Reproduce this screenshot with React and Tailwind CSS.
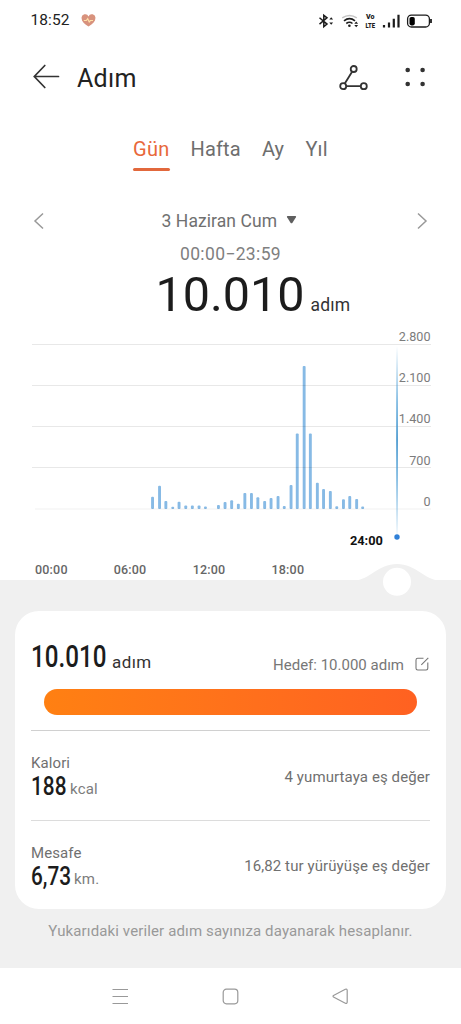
import React from "react";

const bars = [
  [152.5, 496.7], [159.5, 485.7], [165.8, 501], [172.7, 506.8], [179, 501.8],
  [185.7, 505.4], [192.3, 505.4], [199, 505.4], [205.4, 506.6], [218.4, 505],
  [225, 502], [231.6, 500.3], [238.3, 503.7], [244.8, 493], [251.4, 493],
  [257.8, 497.3], [264.6, 501], [271, 498], [278, 496], [284.2, 506],
  [291, 485], [297.2, 433.5], [304.1, 366], [310.3, 433.5], [317.3, 482.7],
  [323.5, 489], [330.3, 491], [336.7, 506.2], [343.4, 499.3], [349.7, 496],
  [356.6, 499], [362.6, 506.4],
];

const yAxis = [
  ["2.800", 341, 344.5],
  ["2.100", 382, 385.5],
  ["1.400", 423, 426.5],
  ["700", 464.7, 467.5],
  ["0", 505.5, 509],
];

const xAxis = [["00:00", 35], ["06:00", 113.7], ["12:00", 192.7], ["18:00", 271.5]];

function StatusBar() {
  return (
    <div className="flex h-[41px] items-center justify-between pl-[30.5px] pr-[28px]">
      <div className="flex items-center">
        <span className="text-[15.5px] tracking-[0.1px] text-[#222]">18:52</span>
        <svg className="ml-[11.5px]" width="15" height="13" viewBox="0 0 15 13">
          <path d="M7.5 12.6C3 9.6.6 7.2.6 4.2A3.6 3.6 0 0 1 7.5 2.4 3.6 3.6 0 0 1 14.4 4.2c0 3-2.4 5.400-6.900 8.400z" fill="#d8927d" />
          <path d="M2.800 6.500h2.500l1.400-1.800 1.500 3.200 1.200-1.400h2.600" fill="none" stroke="#ffe0a8" strokeWidth="1.200" />
        </svg>
      </div>
      <svg width="115" height="16" viewBox="318 12.500 115 16" fill="none" stroke="#1c1c1c">
        <path d="M319.500 17.300l7.500 6.300-3.200 2.500V14.800l3.200 2.500-7.500 6.300" strokeWidth="1.500" />
        <path d="M329.300 19l1.900-2.300 1.900 2.300zM329.300 22l1.900 2.300 1.900-2.300z" fill="#1c1c1c" stroke="none" />
        <path d="M342.200 17.400q7.300-4.800 14.600 0" stroke="#c4c4c4" strokeWidth="1.500" />
        <path d="M344 20.300q5.500-4.300 11 0" strokeWidth="1.700" />
        <path d="M346.300 23q3.200-2.400 6.200 0" strokeWidth="1.600" />
        <circle cx="349.400" cy="25.300" r="1.300" fill="#1c1c1c" stroke="none" />
        <path d="M354.300 23.300l1.900-2.200 1.900 2.200zM354.300 24.500l1.900 2.200 1.900-2.200z" fill="#1c1c1c" stroke="none" />
        <text x="366" y="18.900" textLength="8.500" lengthAdjust="spacingAndGlyphs" fontSize="6.600" fontWeight="900" fill="#1c1c1c" stroke="none">Vo</text>
        <text x="365.500" y="27.400" textLength="9.600" lengthAdjust="spacingAndGlyphs" fontSize="7" fontWeight="900" fill="#1c1c1c" stroke="none">LTE</text>
        <path d="M384 24.600V27M389 22v5M393.800 18.300V27M398.500 14.300V27" strokeWidth="2.200" />
        <rect x="407.600" y="14.700" width="21.800" height="11.800" rx="3.800" strokeWidth="1.300" />
        <rect x="409.500" y="16.400" width="5.300" height="8.500" rx="1.800" fill="#000" stroke="none" />
        <path d="M431 18.500v4" strokeWidth="1.800" />
      </svg>
    </div>
  );
}

function Header() {
  return (
    <div className="flex h-[74px] items-center pl-[33px] pr-[35px]">
      <svg className="-mt-[3px]" width="27" height="25" viewBox="0 0 27 25" fill="none" stroke="#333" strokeWidth="1.700" strokeLinecap="round">
        <path d="M11.800 1.500L1.300 12.500 11.800 23.500M1.300 12.500H25.500" />
      </svg>
      <h1 className="ml-[17px] mt-[2px] text-[25px] font-normal leading-[30px] tracking-[0.3px] text-[#222]">Adım</h1>
      <svg className="-mt-[2px] ml-auto" width="30" height="27" viewBox="0 0 30 27" fill="none" stroke="#333" strokeWidth="1.800">
        <circle cx="15.700" cy="5" r="3" />
        <circle cx="5.200" cy="22.200" r="3" />
        <circle cx="25.800" cy="22.200" r="3" />
        <path d="M14.100 7.700L6.800 19.500M8.300 22.200H22.700" />
      </svg>
      <svg className="-mt-[3px] ml-[36.500px]" width="22" height="22" viewBox="0 0 22 22" fill="#333">
        <circle cx="3.700" cy="4" r="2.300" />
        <circle cx="18.600" cy="4" r="2.300" />
        <circle cx="3.700" cy="18" r="2.300" />
        <circle cx="18.600" cy="18" r="2.300" />
      </svg>
    </div>
  );
}

function Tabs() {
  return (
    <nav className="flex h-[60px] pl-[133px] pt-[14px] text-[20px] leading-[40px] text-[#6e6e6e]">
      <div className="w-[37px] text-[#e8683a]">
        <div className="h-[39px] tracking-[0.3px]">Gün</div>
        <div className="h-[2.5px] rounded-full bg-[#e2683c]" />
      </div>
      <div className="ml-[20.5px] w-[52px] tracking-[0.15px]">Hafta</div>
      <div className="ml-[19.5px] w-[24px]">Ay</div>
      <div className="ml-[19.5px] tracking-[0.1px]">Yıl</div>
    </nav>
  );
}

function Summary() {
  return (
    <section>
      <div className="mt-[26px] flex h-[40px] items-center pl-[33px] pr-[33px]">
        <svg width="12" height="18" viewBox="0 0 12 18" fill="none" stroke="#999" strokeWidth="1.500"><path d="M10 1.500L2 9l8 7.500" /></svg>
        <span className="ml-[116.500px] w-[117px] whitespace-nowrap text-[17.500px] tracking-[0.080px] text-[#707070]">3 Haziran Cum</span>
        <svg className="-mt-[3px] ml-[7px]" width="11" height="8" viewBox="0 0 11 8" fill="#5f5f5f"><path d="M1.800 0h7.400q1.500 0 .7 1.300L6.500 6.700q-1 1-2 0L1.100 1.300Q.3 0 1.800 0z" /></svg>
        <svg className="ml-auto" width="12" height="18" viewBox="0 0 12 18" fill="none" stroke="#999" strokeWidth="1.500"><path d="M2 1.500L10 9l-8 7.500" /></svg>
      </div>
      <div className="h-[26px] text-center text-[17.500px] leading-[26px] tracking-[0.35px] text-[#808080]">00:00−23:59</div>
      <div className="flex h-[55px] items-baseline pl-[155.500px] text-[#1c1c1c]">
        <span className="w-[150px] text-[48.500px] leading-[55px]">10.010</span>
        <span className="ml-[5px] text-[17.500px] leading-[20px] tracking-[0.2px] text-[#333]">adım</span>
      </div>
    </section>
  );
}

function StepChart() {
  return (
    <svg className="relative block overflow-visible" width="461" height="258" viewBox="0 322 461 258">
      <defs>
        <linearGradient id="cursor" x1="0" y1="0" x2="0" y2="1">
          <stop offset="0" stopColor="#4d9fd6" stopOpacity="0" />
          <stop offset="0.300" stopColor="#4d9fd6" stopOpacity="0.750" />
          <stop offset="0.500" stopColor="#4596cd" />
          <stop offset="0.700" stopColor="#4d9fd6" stopOpacity="0.750" />
          <stop offset="1" stopColor="#4d9fd6" stopOpacity="0.080" />
        </linearGradient>
      </defs>
      {bars.map(([x, y]) => (
        <rect key={x} x={x - 1.400} y={y} width="2.900" height={509 - y} rx="1" fill="#87bae5" />
      ))}
      {yAxis.map(([label, base, line]) => (
        <g key={label}>
          <path d={`M${label === "0" ? 35 : 32} ${line}H431`} stroke="#000" strokeOpacity={label === "0" ? 0.060 : 0.090} />
          <text x="430.500" y={base} textAnchor="end" fontSize="12.600" fill="#7c7c7c">{label}</text>
        </g>
      ))}
      <rect x="396.200" y="346" width="1.700" height="188" fill="url(#cursor)" />
      <circle cx="397" cy="537" r="2.700" fill="#2f80d8" />
      <text x="350" y="545.300" textLength="32.800" fontSize="12.800" fontWeight="700" fill="#111">24:00</text>
      {xAxis.map(([label, x]) => (
        <text key={label} x={x} y="574.400" textLength="32.500" fontSize="12.500" fontWeight="500" fill="#666">{label}</text>
      ))}
      <path d="M354 580.500C370 580 378 564 397 564S424 580 440 580.500z" fill="#f0f0f0" />
      <circle cx="397" cy="581.800" r="14" fill="#fff" />
    </svg>
  );
}

function Metric({ label, value, valueClass, unit, note, noteClass }) {
  return (
    <div className="flex h-[89px] justify-between">
      <div className="pt-[22px]">
        <div className="text-[15px] leading-[20px] tracking-[0.1px] text-[#707070]">{label}</div>
        <div className="flex items-baseline">
          <div className={valueClass}>
            <span className="inline-block origin-left scale-x-[0.8] text-[26px] font-medium leading-[26px] text-[#1c1c1c]">{value}</span>
          </div>
          <span className="-translate-y-px text-[15px] leading-[20px] tracking-[0.2px] text-[#7c7c7c]">{unit}</span>
        </div>
      </div>
      <div className={noteClass}>{note}</div>
    </div>
  );
}

function DetailCard() {
  return (
    <div className="mx-[15px] h-[298px] rounded-[24px] bg-white px-4 pt-[32px]">
      <div className="flex h-[30px] items-center">
        <div className="w-[81px]">
          <span className="inline-block origin-left scale-x-[0.78] text-[31px] font-medium leading-[30px] text-[#1c1c1c]">10.010</span>
        </div>
        <span className="mt-[8px] text-[17px] leading-[20px] tracking-[0.4px] text-[#333]">adım</span>
        <span className="ml-auto mt-[13px] text-[15px] leading-[20px] text-[#777]">Hedef: 10.000 adım</span>
        <svg className="ml-[11px] mr-px mt-[11px]" width="14" height="14" viewBox="0 0 14 14" fill="none" stroke="#777" strokeWidth="1.100">
          <path d="M8.500 1.200H2.700Q1 1.200 1 2.900v8.400Q1 13 2.700 13h8.400q1.700 0 1.700-1.700V5.500M6.300 7.800L13.300.8" />
        </svg>
      </div>
      <div className="ml-[12.500px] mr-[13px] mt-[16px] h-[26px] rounded-full bg-gradient-to-r from-[#ff8012] to-[#ff6121]" />
      <div className="mt-[15px] h-px bg-[#d0d0d0]" />
      <Metric
        label="Kalori" value="188" valueClass="w-[39px]" unit="kcal" note="4 yumurtaya eş değer"
        noteClass="self-center pt-[2px] text-[15px] leading-[20px] tracking-[0.1px] text-[#707070]"
      />
      <div className="h-px bg-[#dcdcdc]" />
      <Metric
        label="Mesafe" value="6,73" valueClass="w-[43px]" unit="km." note="16,82 tur yürüyüşe eş değer"
        noteClass="self-center text-[15px] leading-[20px] tracking-[0.1px] text-[#707070]"
      />
    </div>
  );
}

function NavBar() {
  return (
    <div className="flex h-[56px] items-center justify-between bg-white pl-[112px] pr-[112px]">
      <svg width="17" height="17" viewBox="0 0 17 17" stroke="#999" strokeWidth="1.200"><path d="M.5 1.500h15.500M.5 8.500h15.500M.5 15.500h15.500" /></svg>
      <svg width="17" height="17" viewBox="0 0 17 17" fill="none" stroke="#999" strokeWidth="1.200"><rect x="1.200" y="1.200" width="14.600" height="14.600" rx="3.200" /></svg>
      <svg width="17" height="17" viewBox="0 0 17 17" fill="none" stroke="#999" strokeWidth="1.200"><path d="M1.500 7.500L13.300 1.300Q15.200.6 15.200 2.500V14q0 1.900-1.900 1.200L1.500 9q-.9-.7 0-1.500z" /></svg>
    </div>
  );
}

export default function App() {
  return (
    <div className="h-[1024px] w-[461px] overflow-hidden bg-white font-[Roboto,sans-serif]">
      <StatusBar />
      <Header />
      <Tabs />
      <Summary />
      <StepChart />
      <main className="h-[388px] bg-[#f0f0f0] pt-[31px]">
        <DetailCard />
        <p className="mt-[11px] text-center text-[15px] leading-[22px] tracking-[0.130px] text-[#999]">
          Yukarıdaki veriler adım sayınıza dayanarak hesaplanır.
        </p>
      </main>
      <NavBar />
    </div>
  );
}
